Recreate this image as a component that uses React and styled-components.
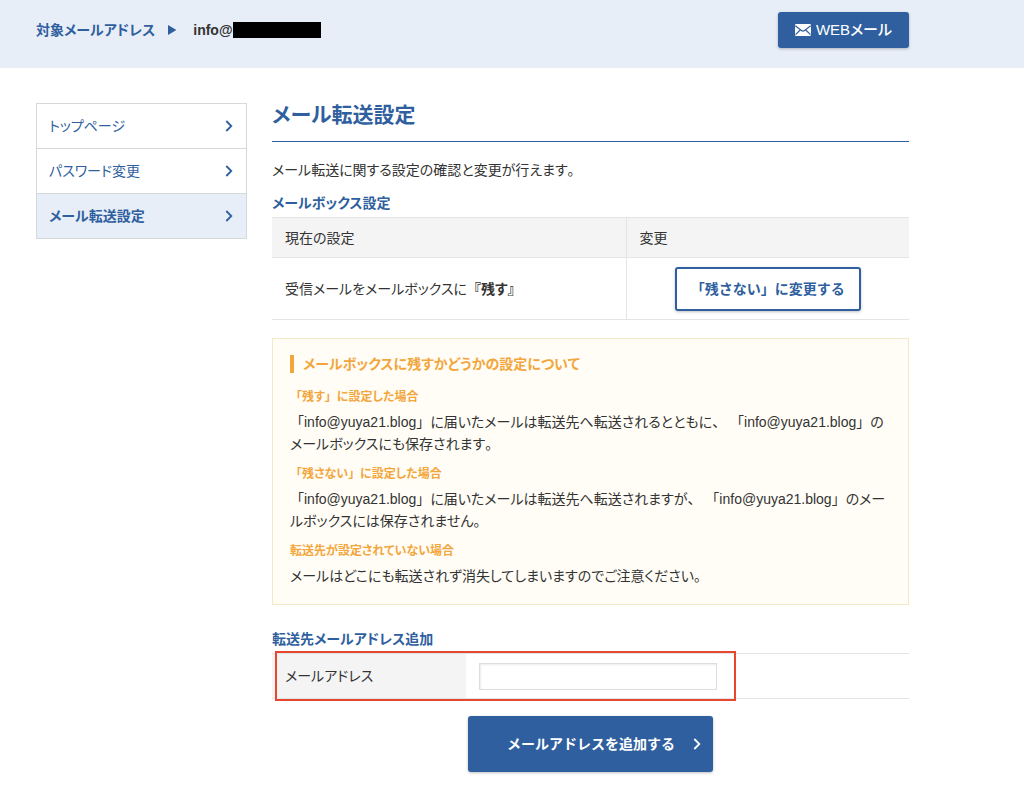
import React from 'react';
import styled, { createGlobalStyle, css } from 'styled-components';

const colors = {
  blue: '#2f5f9e',
  paleBlue: '#e7eef8',
  text: '#333',
  line: '#e4e4e4',
  menuLine: '#d6d9dc',
  grey: '#f4f4f4',
  orange: '#f3a63c',
  noteBg: '#fffdf6',
  noteLine: '#f3e9c6',
  red: '#e8472f',
};

const GlobalStyle = createGlobalStyle`
  * {
    box-sizing: border-box;
  }
  body {
    margin: 0;
    background: #fff;
    color: ${colors.text};
    font-family: 'Liberation Sans', 'Noto Sans CJK JP', sans-serif;
    font-size: 14px;
    line-height: 22px;
    font-feature-settings: 'palt';
  }
  button, input {
    font: inherit;
    font-feature-settings: normal;
  }
  h1, h2, h3, h4, p, ul {
    margin: 0;
    padding: 0;
  }
`;

const Header = styled.header`
  display: flex;
  align-items: flex-start;
  justify-content: space-between;
  padding: 12px 115px 20px 36px;
  background: ${colors.paleBlue};
`;

const Account = styled.div`
  display: flex;
  align-items: center;
  gap: 13px;
  height: 36px;
  font-weight: bold;
`;

const AccountLabel = styled.span`
  color: ${colors.blue};
`;

const Address = styled.span`
  display: flex;
  align-items: center;
  margin-left: 3px;
`;

const Masked = styled.span`
  width: 88px;
  height: 16px;
  background: #000;
`;

const buttonBase = css`
  display: flex;
  align-items: center;
  justify-content: center;
  border: 0;
  border-radius: 3px;
  background: ${colors.blue};
  color: #fff;
  box-shadow: 0 1px 3px rgba(0, 0, 0, 0.25);
  white-space: nowrap;
  cursor: pointer;
`;

const WebmailButton = styled.button`
  ${buttonBase}
  gap: 5px;
  height: 36px;
  padding: 0 17px;
  font-size: 15px;
  font-weight: 500;
  font-feature-settings: 'palt';
`;

const Page = styled.div`
  display: grid;
  grid-template-columns: 211px 1fr;
  gap: 25px;
  align-items: start;
  padding: 35px 115px 12px 36px;
`;

const Menu = styled.ul`
  list-style: none;
  border: 1px solid ${colors.menuLine};
`;

const MenuItem = styled.li`
  & + & {
    border-top: 1px solid ${colors.menuLine};
  }
`;

const MenuLink = styled.a`
  display: flex;
  align-items: center;
  justify-content: space-between;
  height: 44px;
  padding: 0 13px 0 12px;
  color: ${colors.blue};
  text-decoration: none;
  background: ${({ $active }) => ($active ? colors.paleBlue : '#fff')};
  font-weight: ${({ $active }) => ($active ? 'bold' : 'normal')};
`;

const Title = styled.h1`
  padding-bottom: 14px;
  border-bottom: 1px solid ${colors.blue};
  color: ${colors.blue};
  font-size: 21px;
  line-height: 24px;
`;

const Lead = styled.p`
  margin-top: 17px;
`;

const SectionTitle = styled.h2`
  margin-top: ${({ $top }) => $top}px;
  margin-bottom: 3px;
  color: ${colors.blue};
  font-size: 14px;
  line-height: 22px;
`;

const Table = styled.table`
  width: 100%;
  border-collapse: collapse;
  table-layout: fixed;

  th, td {
    padding: 0 13px;
    border-top: 1px solid ${colors.line};
    border-bottom: 1px solid ${colors.line};
    text-align: left;
    font-weight: normal;
  }
  th {
    background: ${colors.grey};
  }
`;

const SettingTable = styled(Table)`
  th {
    height: 40px;
  }
  td {
    height: 62px;
  }
  th + th, td + td {
    border-left: 1px solid ${colors.line};
  }
  th:first-child {
    width: 354px;
  }
`;

const ChangeButton = styled.button`
  ${buttonBase}
  height: 44px;
  margin: 0 auto;
  padding: 0 14px;
  border: 2px solid ${colors.blue};
  background: #fff;
  color: ${colors.blue};
  font-weight: bold;
`;

const Note = styled.section`
  margin-top: 18px;
  padding: 16px 17px 17px;
  border: 1px solid ${colors.noteLine};
  background: ${colors.noteBg};
`;

const NoteTitle = styled.h3`
  margin-bottom: 14px;
  padding-left: 9px;
  border-left: 4px solid ${colors.orange};
  color: ${colors.orange};
  font-size: 14px;
  line-height: 18px;
`;

const NoteItem = styled.div`
  & + & {
    margin-top: 9px;
  }
`;

const NoteHeading = styled.h4`
  color: ${colors.orange};
  font-size: 12px;
  line-height: 20px;
`;

const NoteText = styled.p`
  margin-top: 4px;
`;

const NoteLine = styled.span`
  display: block;
`;

const FormTable = styled(Table)`
  th, td {
    height: 45px;
  }
  th {
    width: 194px;
  }
`;

const FormArea = styled.div`
  position: relative;
`;

const Highlight = styled.div`
  position: absolute;
  top: -2px;
  left: 3px;
  width: 461px;
  height: 50px;
  border: 2px solid ${colors.red};
  pointer-events: none;
`;

const TextInput = styled.input`
  display: block;
  width: 238px;
  height: 27px;
  padding: 0 6px;
  border: 1px solid #ddd;
  background: #fff;
  box-shadow: inset 1px 1px 2px rgba(0, 0, 0, 0.08);
`;

const SubmitButton = styled.button`
  ${buttonBase}
  gap: 18px;
  height: 56px;
  margin: 17px auto 0;
  padding: 0 12px 0 39px;
  font-weight: bold;
`;

const Chevron = () => (
  <svg width="8" height="12" viewBox="0 0 8 12" fill="none" stroke="currentColor" strokeWidth="1.8" aria-hidden="true">
    <path d="M1.3 1 L6.3 6 L1.3 11" />
  </svg>
);

const Triangle = () => (
  <svg width="9" height="10" viewBox="0 0 9 10" fill={colors.blue} aria-hidden="true">
    <path d="M0 0 L8.4 5 L0 10 Z" />
  </svg>
);

const MailIcon = () => (
  <svg width="16" height="12" viewBox="0 0 16 12" aria-hidden="true">
    <rect width="16" height="12" rx="1" fill="#fff" />
    <path
      d="M0.3 1.6 L6.4 6.5 Q8 7.8 9.6 6.5 L15.7 1.6 M0.5 10.6 L5.2 6 M15.5 10.6 L10.8 6"
      fill="none"
      stroke={colors.blue}
      strokeWidth="1.2"
    />
  </svg>
);

const WideMark = styled.span`
  font-feature-settings: normal;
`;

// Kana is set proportionally, brackets and stops keep their full width
const jp = (text) => text.split(/([「」『』、。]+)/).map((part, i) => (
  i % 2 ? <WideMark key={i}>{part}</WideMark> : part
));

const menu = [
  { label: 'トップページ' },
  { label: 'パスワード変更' },
  { label: 'メール転送設定', active: true },
];

const notes = [
  {
    heading: '「残す」に設定した場合',
    lines: [
      '「info@yuya21.blog」に届いたメールは転送先へ転送されるとともに、 「info@yuya21.blog」の',
      'メールボックスにも保存されます。',
    ],
  },
  {
    heading: '「残さない」に設定した場合',
    lines: [
      '「info@yuya21.blog」に届いたメールは転送先へ転送されますが、 「info@yuya21.blog」のメー',
      'ルボックスには保存されません。',
    ],
  },
  {
    heading: '転送先が設定されていない場合',
    lines: ['メールはどこにも転送されず消失してしまいますのでご注意ください。'],
  },
];

const App = () => (
  <>
    <GlobalStyle />
    <Header>
      <Account>
        <AccountLabel>対象メールアドレス</AccountLabel>
        <Triangle />
        <Address>
          info@
          <Masked />
        </Address>
      </Account>
      <WebmailButton type="button">
        <MailIcon />
        WEBメール
      </WebmailButton>
    </Header>
    <Page>
      <nav>
        <Menu>
          {menu.map(({ label, active }) => (
            <MenuItem key={label}>
              <MenuLink href="#" $active={active}>
                {label}
                <Chevron />
              </MenuLink>
            </MenuItem>
          ))}
        </Menu>
      </nav>
      <main>
        <Title>メール転送設定</Title>
        <Lead>{jp('メール転送に関する設定の確認と変更が行えます。')}</Lead>
        <SectionTitle $top={11}>メールボックス設定</SectionTitle>
        <SettingTable>
          <thead>
            <tr>
              <th scope="col">現在の設定</th>
              <th scope="col">変更</th>
            </tr>
          </thead>
          <tbody>
            <tr>
              <td>
                受信メールをメールボックスに
                <strong>{jp('『残す』')}</strong>
              </td>
              <td>
                <ChangeButton type="button">「残さない」に変更する</ChangeButton>
              </td>
            </tr>
          </tbody>
        </SettingTable>
        <Note>
          <NoteTitle>メールボックスに残すかどうかの設定について</NoteTitle>
          {notes.map(({ heading, lines }) => (
            <NoteItem key={heading}>
              <NoteHeading>{jp(heading)}</NoteHeading>
              <NoteText>
                {lines.map((line) => (
                  <NoteLine key={line}>{jp(line)}</NoteLine>
                ))}
              </NoteText>
            </NoteItem>
          ))}
        </Note>
        <SectionTitle $top={23}>転送先メールアドレス追加</SectionTitle>
        <FormArea>
          <FormTable>
            <tbody>
              <tr>
                <th scope="row">
                  <label htmlFor="mail">メールアドレス</label>
                </th>
                <td>
                  <TextInput id="mail" type="text" />
                </td>
              </tr>
            </tbody>
          </FormTable>
          <Highlight />
        </FormArea>
        <SubmitButton type="button">
          メールアドレスを追加する
          <Chevron />
        </SubmitButton>
      </main>
    </Page>
  </>
);

export default App;
